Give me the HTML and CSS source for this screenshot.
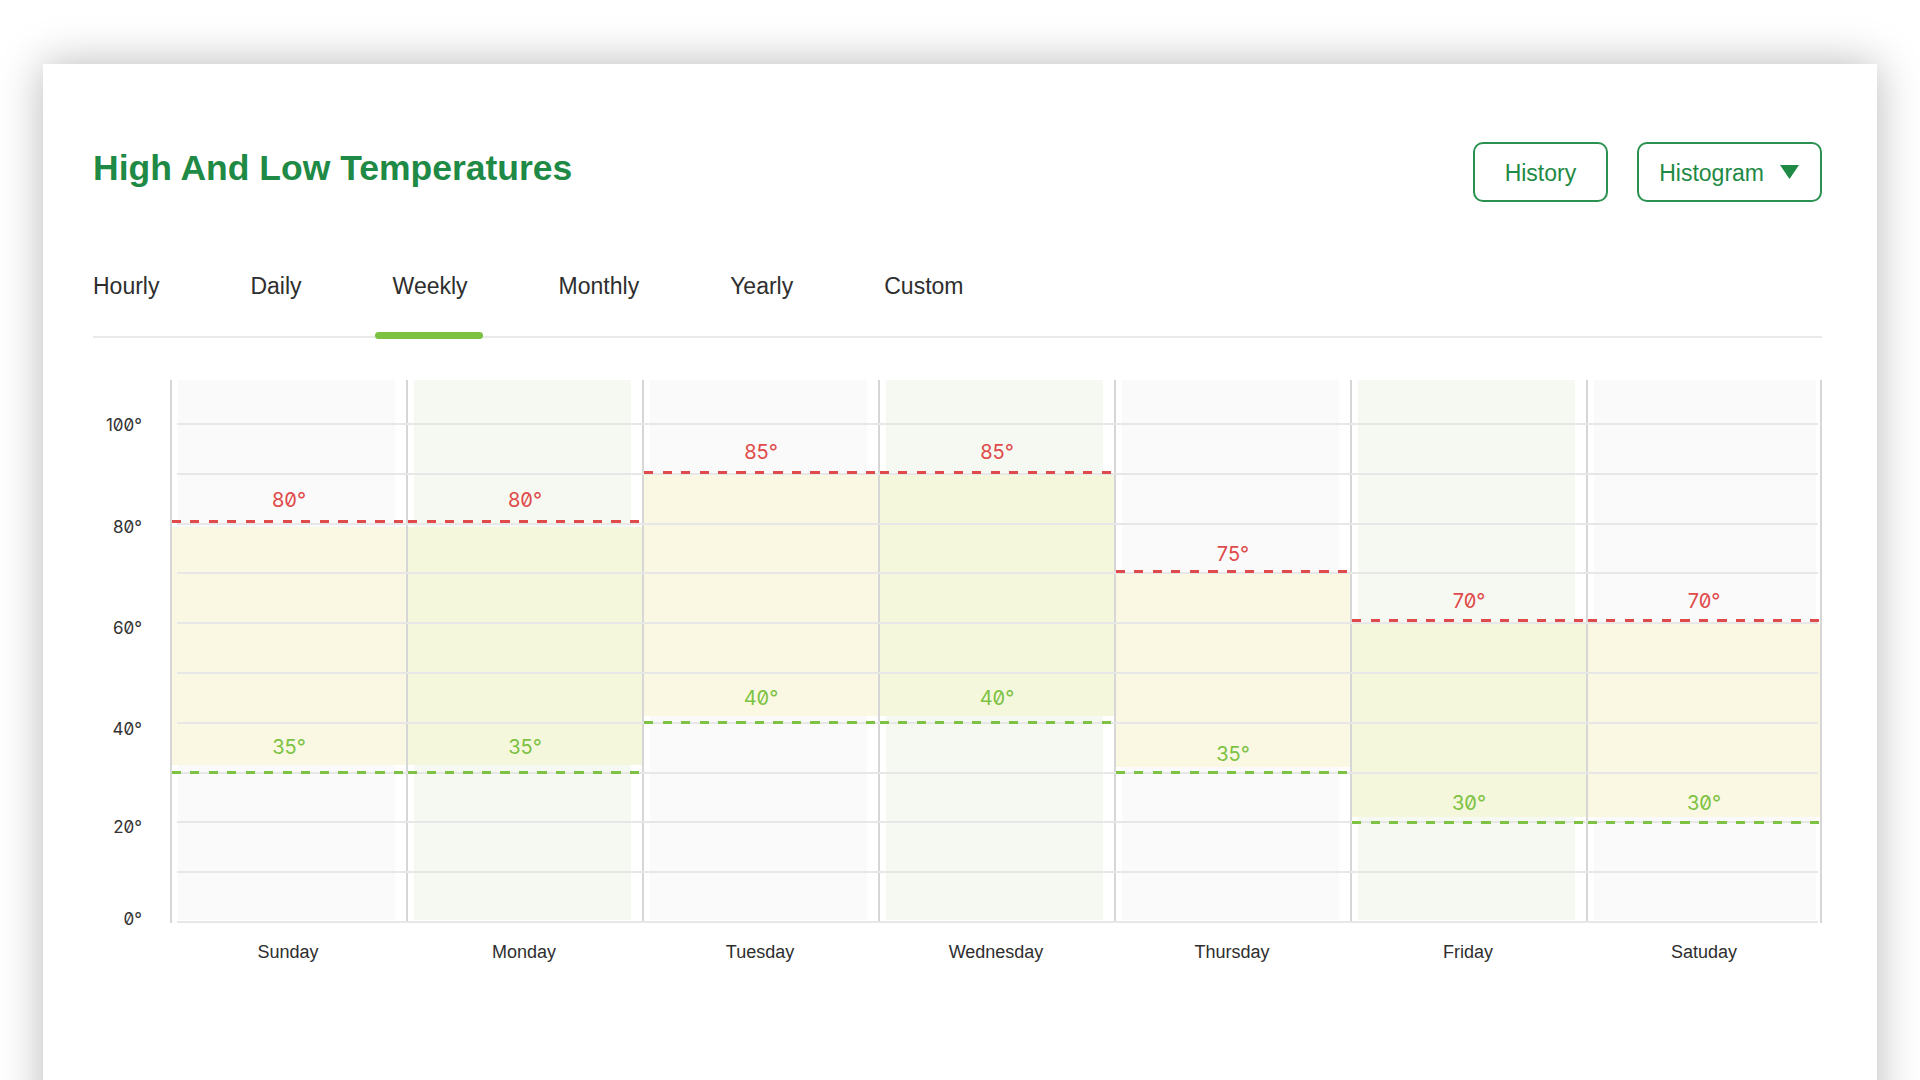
FILE: index.html
```html
<!DOCTYPE html>
<html lang="en">
<head>
<meta charset="utf-8">
<title>High And Low Temperatures</title>
<link rel="stylesheet" href="styles.css">
</head>
<body>
<div class="page">
  <div class="card">
    <header class="card-header">
      <h1 class="title">High And Low Temperatures</h1>
      <div class="actions">
        <button class="btn">History</button>
        <button class="btn btn-dropdown">Histogram
          <svg class="caret" width="19" height="14" viewBox="0 0 19 14"><path d="M0 0H19L9.5 14Z"/></svg>
        </button>
      </div>
    </header>

    <nav class="tabs">
      <a class="tab">Hourly</a>
      <a class="tab">Daily</a>
      <a class="tab tab-active">Weekly</a>
      <a class="tab">Monthly</a>
      <a class="tab">Yearly</a>
      <a class="tab">Custom</a>
    </nav>

    <div class="chart">
      <div class="y-axis">
        <span class="y-label" style="top:35px">100°</span>
        <span class="y-label" style="top:137px">80°</span>
        <span class="y-label" style="top:238px">60°</span>
        <span class="y-label" style="top:339px">40°</span>
        <span class="y-label" style="top:437px">20°</span>
        <span class="y-label" style="top:529px">0°</span>
      </div>

      <div class="plot">
        <div class="col col-a">
          <div class="col-bg"></div>
          <div class="band" style="top:147px;height:238px"></div>
          <div class="dash dash-high" style="top:140px"></div>
          <div class="dash dash-low" style="top:391px"></div>
          <span class="val val-high" style="top:110px">80°</span>
          <span class="val val-low" style="top:357px">35°</span>
        </div>
        <div class="col col-b">
          <div class="col-bg"></div>
          <div class="band" style="top:147px;height:238px"></div>
          <div class="dash dash-high" style="top:140px"></div>
          <div class="dash dash-low" style="top:391px"></div>
          <span class="val val-high" style="top:110px">80°</span>
          <span class="val val-low" style="top:357px">35°</span>
        </div>
        <div class="col col-a">
          <div class="col-bg"></div>
          <div class="band" style="top:94px;height:242px"></div>
          <div class="dash dash-high" style="top:91px"></div>
          <div class="dash dash-low" style="top:341px"></div>
          <span class="val val-high" style="top:62px">85°</span>
          <span class="val val-low" style="top:308px">40°</span>
        </div>
        <div class="col col-b">
          <div class="col-bg"></div>
          <div class="band" style="top:94px;height:242px"></div>
          <div class="dash dash-high" style="top:91px"></div>
          <div class="dash dash-low" style="top:341px"></div>
          <span class="val val-high" style="top:62px">85°</span>
          <span class="val val-low" style="top:308px">40°</span>
        </div>
        <div class="col col-a">
          <div class="col-bg"></div>
          <div class="band" style="top:193px;height:194px"></div>
          <div class="dash dash-high" style="top:190px"></div>
          <div class="dash dash-low" style="top:391px"></div>
          <span class="val val-high" style="top:164px">75°</span>
          <span class="val val-low" style="top:364px">35°</span>
        </div>
        <div class="col col-b">
          <div class="col-bg"></div>
          <div class="band" style="top:244px;height:193px"></div>
          <div class="dash dash-high" style="top:239px"></div>
          <div class="dash dash-low" style="top:441px"></div>
          <span class="val val-high" style="top:211px">70°</span>
          <span class="val val-low" style="top:413px">30°</span>
        </div>
        <div class="col col-a col-last">
          <div class="col-bg"></div>
          <div class="band" style="top:244px;height:193px"></div>
          <div class="dash dash-high" style="top:239px"></div>
          <div class="dash dash-low" style="top:441px"></div>
          <span class="val val-high" style="top:211px">70°</span>
          <span class="val val-low" style="top:413px">30°</span>
        </div>

        <div class="gridlines">
          <i></i><i></i><i></i><i></i><i></i><i></i><i></i><i></i><i></i><i></i><i></i>
        </div>
      </div>

      <div class="x-axis">
        <span class="day">Sunday</span>
        <span class="day">Monday</span>
        <span class="day">Tuesday</span>
        <span class="day">Wednesday</span>
        <span class="day">Thursday</span>
        <span class="day">Friday</span>
        <span class="day">Satuday</span>
      </div>
    </div>
  </div>
</div>
</body>
</html>
```

FILE: styles.css
```css
* { box-sizing: border-box; }

html, body {
  margin: 0;
  padding: 0;
  background: #ffffff;
  overflow: hidden;
}

body {
  font-family: "Liberation Sans", Arial, sans-serif;
  color: #333333;
}

.page {
  height: 1080px;
  padding: 64px 43px 0 43px;
  overflow: hidden;
}

.card {
  background: #ffffff;
  height: 1100px;
  padding: 78px 55px 0 50px;
  box-shadow: 0 0 42px rgba(0, 0, 0, 0.28);
}

/* Header */
.card-header {
  display: flex;
  justify-content: space-between;
  align-items: flex-start;
}

.title {
  margin: 6px 0 0 0;
  font-size: 35.5px;
  line-height: 40px;
  font-weight: 700;
  color: #1e8a45;
}

.actions {
  display: flex;
  gap: 29px;
}

.btn {
  height: 60px;
  padding: 3px 30px 0 30px;
  border: 2px solid #2b9150;
  border-radius: 10px;
  background: #ffffff;
  color: #1e8a45;
  font-family: "Liberation Sans", Arial, sans-serif;
  font-size: 23px;
  display: flex;
  align-items: center;
  cursor: pointer;
}

.btn-dropdown {
  padding-left: 20px;
  padding-right: 21px;
  gap: 16px;
}

.caret {
  fill: #1e8a45;
  margin-top: -3px;
}

/* Tabs */
.tabs {
  margin-top: 71px;
  display: flex;
  gap: 91px;
  border-bottom: 2px solid #e9e9e9;
}

.tab {
  position: relative;
  font-size: 23px;
  line-height: 26px;
  padding-bottom: 37px;
  color: #2e2e2e;
}

.tab-active::after {
  content: "";
  position: absolute;
  left: -18px;
  right: -15px;
  bottom: -3px;
  height: 7px;
  border-radius: 4px;
  background: #7dc143;
}

/* Chart */
.chart {
  margin-top: 42px;
  display: grid;
  grid-template-columns: 77px 1652px;
  grid-template-rows: 543px auto;
}

.y-axis {
  position: relative;
}

.y-label {
  position: absolute;
  right: 28px;
  font-family: "Inter", "DejaVu Sans", sans-serif;
  font-variant-numeric: slashed-zero;
  font-feature-settings: "zero" 1;
  font-size: 17px;
  line-height: 20px;
  color: #333333;
  white-space: nowrap;
}

.plot {
  position: relative;
  z-index: 0;
  display: flex;
}

.col {
  position: relative;
  width: 236px;
  flex: 0 0 236px;
  border-left: 2px solid #d6d6d6;
}

.col-last {
  border-right: 2px solid #d6d6d6;
}

.col-bg {
  position: absolute;
  top: 0;
  bottom: 3px;
  left: 6px;
  right: 11px;
  z-index: 0;
}

.col-last .col-bg {
  right: 4px;
}

.col-a .col-bg { background: #fafafa; }
.col-b .col-bg { background: #f6f9f2; }

.band {
  position: absolute;
  left: 0;
  right: 0;
  z-index: 1;
}

.col-a .band { background: #faf8e2; }
.col-b .band { background: #f4f7dc; }

.dash {
  position: absolute;
  left: 0;
  right: 0;
  height: 3px;
  z-index: 3;
}

.dash-high {
  background: repeating-linear-gradient(90deg, #e04a4a 0 9px, transparent 9px 18.5px);
}

.dash-low {
  background: repeating-linear-gradient(90deg, #7dc243 0 9px, transparent 9px 18.5px);
}

.val {
  position: absolute;
  left: 0;
  right: 0;
  text-align: center;
  z-index: 4;
  font-family: "Inter", "DejaVu Sans", sans-serif;
  font-variant-numeric: slashed-zero;
  font-feature-settings: "zero" 1;
  font-size: 20px;
  line-height: 20px;
}

.val-high { color: #e04a4a; }
.val-low { color: #7dc243; }

.gridlines {
  position: absolute;
  top: 43px;
  bottom: 0;
  left: 7px;
  right: 4px;
  z-index: 2;
  display: flex;
  flex-direction: column;
  justify-content: space-between;
  pointer-events: none;
}

.gridlines i {
  display: block;
  height: 2px;
  background: #e7e7e7;
}

.x-axis {
  grid-column: 2;
  display: flex;
  padding-top: 19px;
}

.day {
  width: 236px;
  flex: 0 0 236px;
  text-align: center;
  font-size: 18px;
  line-height: 21px;
  color: #2e2e2e;
}
```
